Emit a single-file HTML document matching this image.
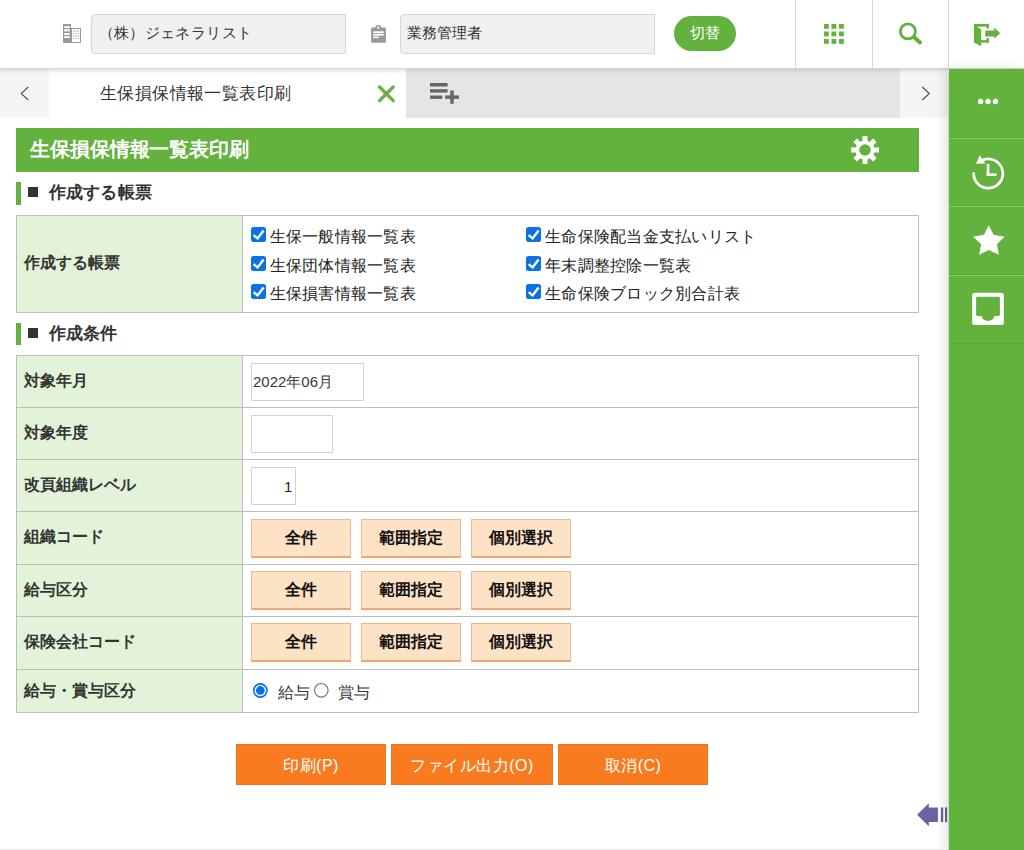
<!DOCTYPE html>
<html lang="ja">
<head>
<meta charset="utf-8">
<style>
*{box-sizing:border-box;margin:0;padding:0}
html,body{width:1024px;height:850px;overflow:hidden;background:#fff;font-family:"Liberation Sans",sans-serif;color:#333}
.abs{position:absolute}
.t{position:absolute;white-space:nowrap;line-height:1}
#hdr{position:absolute;left:0;top:0;width:1024px;height:69px;background:#fff;border-bottom:1px solid #d4d4d4;box-shadow:0 2px 4px rgba(0,0,0,.12);z-index:5}
.inp{position:absolute;top:14px;height:40px;background:#f0f0f0;border:1px solid #d6d6d6;border-radius:4px 0 0 4px}
.vsep{position:absolute;top:0;width:1px;height:68px;background:#d9d9d9}
#tabs{position:absolute;left:0;top:69px;width:949px;height:49px;background:#e5e5e5}
#side{position:absolute;left:949px;top:69px;width:75px;height:781px;background:#63b23d;z-index:6;box-shadow:-4px 0 10px rgba(0,0,0,.13)}
.ssep{position:absolute;left:0;width:75px;height:1px;background:#8acb6a}
#title{position:absolute;left:16px;top:128px;width:903px;height:44px;background:#63b23d}
.secbar{position:absolute;left:16px;width:5px;background:#63b23d}
.sq{position:absolute;left:28px;width:10px;height:10px;background:#333}
.sect{font-weight:bold;font-size:17px;letter-spacing:0.3px;color:#333}
.lbl{font-weight:bold;font-size:16px;color:#333}
.tbl{position:absolute;left:16px;width:903px;border:1px solid #bdbdbd}
.hl{position:absolute;left:16px;width:903px;height:1px;background:#bdbdbd}
.lbg{position:absolute;left:17px;width:225px;background:#e2f3d9}
.vl{position:absolute;left:242px;width:1px;background:#bdbdbd}
.ck{position:absolute;width:15px;height:15px}
.ckt{font-size:16px;letter-spacing:0.25px;color:#222}
.btn{position:absolute;width:100px;height:39px;background:#fde2c6;border:1px solid #e8b995;border-bottom:2px solid #f4a575}
.btnt{font-weight:bold;font-size:16px;color:#111}
.ob{position:absolute;top:744px;height:41px;background:#f97b1f;border:1px solid #ea7420}
.obt{font-size:16px;color:#fff;letter-spacing:0.5px}
.tb{position:absolute;height:38px;border:1px solid #d3d3d3;background:#fff}
</style>
</head>
<body>
<div id="hdr">
  <!-- building icon -->
  <svg class="abs" style="left:63px;top:24px" width="18" height="19" viewBox="0 0 18 19">
    <rect x="0" y="0" width="8" height="19" fill="#999"/>
    <rect x="1.2" y="2.2" width="5.6" height="1.8" fill="#fff"/>
    <rect x="1.2" y="5.2" width="5.6" height="1.8" fill="#fff"/>
    <rect x="1.2" y="9.2" width="5.6" height="1.8" fill="#fff"/>
    <rect x="1.2" y="12.2" width="5.6" height="1.8" fill="#fff"/>
    <rect x="1.2" y="6.8" width="5.6" height="1" fill="#ccc"/>
    <rect x="8" y="4" width="10" height="15" fill="#999"/>
    <rect x="9" y="5" width="8" height="13" fill="#fff"/>
    <g fill="#bbb"><rect x="10.3" y="6.5" width="1.2" height="1.5"/><rect x="12.5" y="6.5" width="1.2" height="1.5"/><rect x="14.7" y="6.5" width="1.2" height="1.5"/>
    <rect x="10.3" y="9" width="1.2" height="1.2"/><rect x="12.5" y="9" width="1.2" height="1.2"/><rect x="14.7" y="9" width="1.2" height="1.2"/>
    <rect x="10.3" y="11.2" width="1.2" height="1.5"/><rect x="12.5" y="11.2" width="1.2" height="1.5"/><rect x="14.7" y="11.2" width="1.2" height="1.5"/>
    <rect x="10.3" y="13.8" width="1.2" height="1.2"/><rect x="12.5" y="13.8" width="1.2" height="1.2"/><rect x="14.7" y="13.8" width="1.2" height="1.2"/></g>
  </svg>
  <div class="inp" style="left:91px;width:255px"></div>
  <div class="t" style="left:98.5px;top:25px;font-size:15px;letter-spacing:0.38px;color:#333">（株）ジェネラリスト</div>
  <!-- clipboard icon -->
  <svg class="abs" style="left:366px;top:20px" width="26" height="26" viewBox="366 20 26 26">
    <rect x="371.1" y="27.6" width="14.8" height="15.2" rx="0.8" fill="#999"/>
    <path d="M375.2 28.2A3 3.2 0 0 1 381.3 28.2Z" fill="#999"/>
    <circle cx="378.2" cy="27.6" r="1.1" fill="#fff"/>
    <rect x="373.2" y="31.3" width="10.5" height="1.8" fill="#fff"/>
    <rect x="373.2" y="33.9" width="10.5" height="1.7" fill="#fff"/>
    <rect x="373.2" y="36.6" width="5.6" height="1.5" fill="#fff"/>
  </svg>
  <div class="inp" style="left:400px;width:255px"></div>
  <div class="t" style="left:407px;top:25px;font-size:15px;color:#333">業務管理者</div>
  <div class="abs" style="left:674px;top:16px;width:62px;height:35px;border-radius:18px;background:#63b23d"></div>
  <div class="t" style="left:690px;top:25px;font-size:15px;color:#fff">切替</div>
  <div class="vsep" style="left:795px"></div>
  <div class="vsep" style="left:872px"></div>
  <div class="vsep" style="left:948px"></div>
  <!-- grid icon -->
  <svg class="abs" style="left:824px;top:24px" width="20" height="20" viewBox="0 0 20 20" fill="#63b23d">
    <rect x="0" y="0" width="4.8" height="4.8"/><rect x="7.5" y="0" width="4.8" height="4.8"/><rect x="15" y="0" width="4.8" height="4.8"/>
    <rect x="0" y="7.5" width="4.8" height="4.8"/><rect x="7.5" y="7.5" width="4.8" height="4.8"/><rect x="15" y="7.5" width="4.8" height="4.8"/>
    <rect x="0" y="15" width="4.8" height="4.8"/><rect x="7.5" y="15" width="4.8" height="4.8"/><rect x="15" y="15" width="4.8" height="4.8"/>
  </svg>
  <!-- search icon -->
  <svg class="abs" style="left:896px;top:20px" width="28" height="28" viewBox="896 20 28 28">
    <circle cx="907.9" cy="31.4" r="7.5" fill="none" stroke="#63b23d" stroke-width="2.8"/>
    <line x1="914.5" y1="37.5" x2="920" y2="42.5" stroke="#63b23d" stroke-width="4" stroke-linecap="round"/>
  </svg>
  <!-- exit icon -->
  <svg class="abs" style="left:970px;top:20px" width="34" height="30" viewBox="970 20 34 30" fill="#63b23d">
    <rect x="974" y="23.9" width="14.9" height="2.8"/><rect x="986.4" y="23.9" width="2.5" height="4.6"/>
    <rect x="986.4" y="38.1" width="2.5" height="4.5"/><rect x="981" y="40.1" width="7.9" height="2.5"/>
    <path d="M974 24.5L981.2 29.4V46.3L974 42.6Z"/>
    <path d="M985.2 30.5H994.3V27.6L1000.2 33.2L994.3 38.6V36.5H985.2Z"/>
  </svg>
</div>

<div id="tabs">
  <div class="abs" style="left:0;top:0;width:49px;height:49px;background:#f5f5f5"></div>
  <svg class="abs" style="left:18px;top:15px" width="14" height="18" viewBox="18 84 14 18"><path d="M28.2 87L21.2 93.5L28.2 100" fill="none" stroke="#4a4a4a" stroke-width="1.05"/></svg>
  <div class="abs" style="left:49px;top:0;width:357px;height:49px;background:#fff"></div>
  <div class="t" style="left:100px;top:16px;font-size:17px;letter-spacing:0.4px;color:#333">生保損保情報一覧表印刷</div>
  <svg class="abs" style="left:376px;top:14px" width="21" height="21" viewBox="376 83 21 21"><path d="M379.6 87L393.2 100.6M393.2 87L379.6 100.6" stroke="#68ae4c" stroke-width="3.4" stroke-linecap="round"/></svg>
  <svg class="abs" style="left:428px;top:12px" width="34" height="24" viewBox="428 81 34 24" fill="#666">
    <rect x="430" y="83" width="17.6" height="3.5"/><rect x="430" y="89.2" width="17.6" height="3.4"/><rect x="430" y="95.5" width="12.3" height="3.4"/>
    <rect x="445.2" y="95.4" width="13.7" height="3.5"/><rect x="450.3" y="90.4" width="3.5" height="13.4"/>
  </svg>
  <div class="abs" style="left:900px;top:0;width:49px;height:49px;background:#f5f5f5"></div>
  <svg class="abs" style="left:918px;top:15px" width="14" height="18" viewBox="918 84 14 18"><path d="M922.3 87L929.3 93.5L922.3 100" fill="none" stroke="#4a4a4a" stroke-width="1.05"/></svg>
</div>

<div id="side">
  <div class="ssep" style="top:68px;background:#5aa23a"></div><div class="ssep" style="top:69px"></div>
  <div class="ssep" style="top:136px;background:#5aa23a"></div><div class="ssep" style="top:137px"></div>
  <div class="ssep" style="top:205px;background:#5aa23a"></div><div class="ssep" style="top:206px"></div>
  <div class="ssep" style="top:274px;background:#5aa23a"></div>
  <svg class="abs" style="left:0;top:-1px" width="75" height="300" viewBox="949 68 75 300" fill="#fff">
    <circle cx="980.6" cy="101.5" r="2.7"/><circle cx="988" cy="101.5" r="2.7"/><circle cx="995.5" cy="101.5" r="2.7"/>
    <path d="M973.7 172.5A14.6 14.6 0 1 0 982.3 160.2" fill="none" stroke="#fff" stroke-width="2.7"/>
    <path d="M979.8 155.2L976 163.8L985.4 163.4Z"/>
    <rect x="986.7" y="164" width="2.7" height="12"/>
    <rect x="986.7" y="173.4" width="9.8" height="2.6"/>
    <path d="M988.7 225.2L993.6 234.7L1004.5 236.7L996.9 244.3L998.9 254.8L988.7 249.9L979.1 254.8L981.1 244.3L973.2 236.7L984 234.7Z"/>
    <path fill-rule="evenodd" d="M974.7 292.8H1001.3A2.5 2.5 0 0 1 1003.8 295.3V322.6A2.5 2.5 0 0 1 1001.3 325.1H974.7A2.5 2.5 0 0 1 972.2 322.6V295.3A2.5 2.5 0 0 1 974.7 292.8Z M977.3 296.8H998.7A1.2 1.2 0 0 1 999.9 298V314.7A1.2 1.2 0 0 1 998.7 315.9H994.3A6.3 5 0 0 1 981.7 315.9H977.3A1.2 1.2 0 0 1 976.1 314.7V298A1.2 1.2 0 0 1 977.3 296.8Z"/>
  </svg>
</div>

<div id="title"></div>
<div class="abs" style="left:948px;top:69px;width:1px;height:781px;background:#c9e6b9;z-index:7"></div>
<div class="t" style="left:30px;top:139px;letter-spacing:-0.1px;font-size:20px;font-weight:bold;color:#fff">生保損保情報一覧表印刷</div>
<svg class="abs" style="left:850px;top:135px" width="30" height="30" viewBox="-15 -15 30 30">
  <g fill="#fff"><circle r="9.6"/><rect x="-2.5" y="-13.9" width="5" height="6" transform="rotate(0)"/><rect x="-2.5" y="-13.9" width="5" height="6" transform="rotate(45)"/><rect x="-2.5" y="-13.9" width="5" height="6" transform="rotate(90)"/><rect x="-2.5" y="-13.9" width="5" height="6" transform="rotate(135)"/><rect x="-2.5" y="-13.9" width="5" height="6" transform="rotate(180)"/><rect x="-2.5" y="-13.9" width="5" height="6" transform="rotate(225)"/><rect x="-2.5" y="-13.9" width="5" height="6" transform="rotate(270)"/><rect x="-2.5" y="-13.9" width="5" height="6" transform="rotate(315)"/></g>
  <circle r="5.8" fill="#63b23d"/>
</svg>

<!-- section 1 -->
<div class="secbar" style="top:182px;height:23px"></div>
<div class="sq" style="top:187px"></div>
<div class="t sect" style="left:48.5px;top:183.5px">作成する帳票</div>
<div class="tbl" style="top:215px;height:98px"></div>
<div class="lbg" style="top:216px;height:96px"></div>
<div class="vl" style="top:216px;height:96px"></div>
<div class="t lbl" style="left:24px;top:255px">作成する帳票</div>
<svg class="ck" style="left:251px;top:227px" viewBox="0 0 15 15"><rect x="0" y="0" width="15" height="15" rx="2.5" fill="#0a72e8"/><path d="M2.6 8.1L6.6 11.4L12.6 3.5" fill="none" stroke="#fff" stroke-width="2.4"/></svg>
<div class="t ckt" style="left:269.5px;top:228.5px">生保一般情報一覧表</div>
<svg class="ck" style="left:251px;top:256px" viewBox="0 0 15 15"><rect x="0" y="0" width="15" height="15" rx="2.5" fill="#0a72e8"/><path d="M2.6 8.1L6.6 11.4L12.6 3.5" fill="none" stroke="#fff" stroke-width="2.4"/></svg>
<div class="t ckt" style="left:269.5px;top:257.5px">生保団体情報一覧表</div>
<svg class="ck" style="left:251px;top:284px" viewBox="0 0 15 15"><rect x="0" y="0" width="15" height="15" rx="2.5" fill="#0a72e8"/><path d="M2.6 8.1L6.6 11.4L12.6 3.5" fill="none" stroke="#fff" stroke-width="2.4"/></svg>
<div class="t ckt" style="left:269.5px;top:285.5px">生保損害情報一覧表</div>
<svg class="ck" style="left:526px;top:227px" viewBox="0 0 15 15"><rect x="0" y="0" width="15" height="15" rx="2.5" fill="#0a72e8"/><path d="M2.6 8.1L6.6 11.4L12.6 3.5" fill="none" stroke="#fff" stroke-width="2.4"/></svg>
<div class="t ckt" style="left:545px;top:228.5px">生命保険配当金支払いリスト</div>
<svg class="ck" style="left:526px;top:256px" viewBox="0 0 15 15"><rect x="0" y="0" width="15" height="15" rx="2.5" fill="#0a72e8"/><path d="M2.6 8.1L6.6 11.4L12.6 3.5" fill="none" stroke="#fff" stroke-width="2.4"/></svg>
<div class="t ckt" style="left:545px;top:257.5px">年末調整控除一覧表</div>
<svg class="ck" style="left:526px;top:284px" viewBox="0 0 15 15"><rect x="0" y="0" width="15" height="15" rx="2.5" fill="#0a72e8"/><path d="M2.6 8.1L6.6 11.4L12.6 3.5" fill="none" stroke="#fff" stroke-width="2.4"/></svg>
<div class="t ckt" style="left:545px;top:285.5px">生命保険ブロック別合計表</div>
<div class="secbar" style="top:323px;height:22px"></div>
<div class="sq" style="top:328px"></div>
<div class="t sect" style="left:48.5px;top:324.5px">作成条件</div>
<div class="tbl" style="top:355px;height:358px"></div>
<div class="lbg" style="top:356px;height:356px"></div>
<div class="vl" style="top:356px;height:356px"></div>
<div class="hl" style="top:407px"></div>
<div class="hl" style="top:459px"></div>
<div class="hl" style="top:511px"></div>
<div class="hl" style="top:564px"></div>
<div class="hl" style="top:616px"></div>
<div class="hl" style="top:669px"></div>
<div class="t lbl" style="left:24px;top:373px">対象年月</div>
<div class="t lbl" style="left:24px;top:425px">対象年度</div>
<div class="t lbl" style="left:24px;top:477px">改頁組織レベル</div>
<div class="t lbl" style="left:24px;top:529px">組織コード</div>
<div class="t lbl" style="left:24px;top:582px">給与区分</div>
<div class="t lbl" style="left:24px;top:634px">保険会社コード</div>
<div class="t lbl" style="left:24px;top:683px">給与・賞与区分</div>
<div class="tb" style="left:251px;top:363px;width:113px"></div>
<div class="t" style="left:253px;top:374px;font-size:15px;color:#3a3a3a">2022年06月</div>
<div class="tb" style="left:251px;top:415px;width:82px"></div>
<div class="tb" style="left:251px;top:467px;width:45px"></div>
<div class="t" style="left:284px;top:478.5px;font-size:15px;color:#222">1</div>
<div class="btn" style="left:251px;top:519px"></div>
<div class="t btnt" style="left:285px;top:530px">全件</div>
<div class="btn" style="left:361px;top:519px"></div>
<div class="t btnt" style="left:379px;top:530px">範囲指定</div>
<div class="btn" style="left:471px;top:519px"></div>
<div class="t btnt" style="left:489px;top:530px">個別選択</div>
<div class="btn" style="left:251px;top:571px"></div>
<div class="t btnt" style="left:285px;top:582px">全件</div>
<div class="btn" style="left:361px;top:571px"></div>
<div class="t btnt" style="left:379px;top:582px">範囲指定</div>
<div class="btn" style="left:471px;top:571px"></div>
<div class="t btnt" style="left:489px;top:582px">個別選択</div>
<div class="btn" style="left:251px;top:623px"></div>
<div class="t btnt" style="left:285px;top:634px">全件</div>
<div class="btn" style="left:361px;top:623px"></div>
<div class="t btnt" style="left:379px;top:634px">範囲指定</div>
<div class="btn" style="left:471px;top:623px"></div>
<div class="t btnt" style="left:489px;top:634px">個別選択</div>
<svg class="abs" style="left:252px;top:682px" width="17" height="17" viewBox="0 0 17 17"><circle cx="8.3" cy="8.5" r="6.6" fill="#fff" stroke="#0a72e8" stroke-width="1.7"/><circle cx="8.3" cy="8.5" r="4.4" fill="#0a72e8"/></svg>
<div class="t" style="left:278px;top:685px;font-size:16px;color:#333">給与</div>
<svg class="abs" style="left:313px;top:682px" width="17" height="17" viewBox="0 0 17 17"><circle cx="8.3" cy="8.3" r="6.8" fill="#fff" stroke="#777" stroke-width="1.2"/></svg>
<div class="t" style="left:338px;top:685px;font-size:16px;color:#333">賞与</div>
<div class="ob" style="left:236px;width:150px;line-height:41px;text-align:center"><span class="obt">印刷(P)</span></div>
<div class="ob" style="left:391px;width:162px;line-height:41px;text-align:center"><span class="obt">ファイル出力(O)</span></div>
<div class="ob" style="left:558px;width:150px;line-height:41px;text-align:center"><span class="obt">取消(C)</span></div>
<svg class="abs" style="left:914px;top:798px" width="36" height="34" viewBox="914 798 36 34" fill="#6664a3">
  <path d="M917.1 814.7L928.8 803.2V807.4H937.9V822.1H928.8V826.2Z"/><rect x="940.9" y="807.4" width="2.3" height="14.7"/><rect x="945" y="807.4" width="2.1" height="14.7"/>
</svg>
<div class="abs" style="left:0;top:849px;width:949px;height:1px;background:#ececec"></div>
</body>
</html>
